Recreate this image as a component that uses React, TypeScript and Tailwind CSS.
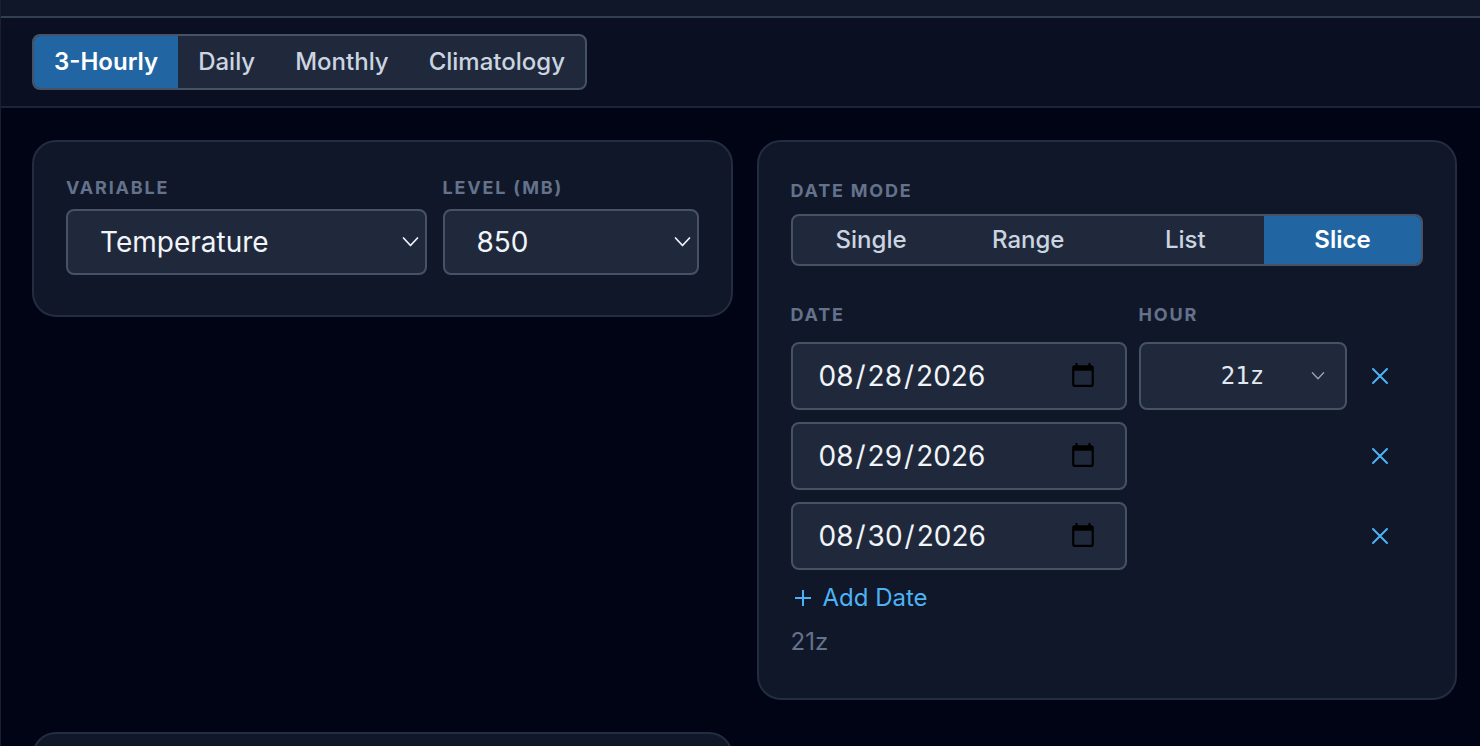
import { useState } from "react";

type SliceRow = { id: number; date: string };

const RESOLUTIONS = ["3-Hourly", "Daily", "Monthly", "Climatology"];
const DATE_MODES = ["Single", "Range", "List", "Slice"];
const VARIABLES = ["Temperature", "Humidity", "Geopotential Height"];
const LEVELS = ["1000", "850", "700", "500", "250"];
const HOURS = ["00z", "03z", "06z", "09z", "12z", "15z", "18z", "21z"];

const cardClass = "rounded-3xl border-2 border-[#232d40] bg-[#101729]";
const labelClass = "block text-lg font-bold uppercase tracking-widest text-[#64728b]";
const fieldClass = "w-full rounded-lg border-2 border-[#465366] bg-[#20293b]";
const dateFieldClass =
  "[&::-webkit-datetime-edit-month-field]:px-[2px] [&::-webkit-datetime-edit-day-field]:px-[2px] [&::-webkit-datetime-edit-year-field]:px-[2px]";

function Chevron({ className }: { className: string }) {
  return (
    <svg viewBox="0 0 16 10" fill="none" stroke="currentColor" strokeWidth="1.7" strokeLinecap="round" strokeLinejoin="round" className={className} aria-hidden="true">
      <path d="M1 1l7 7.5L15 1" />
    </svg>
  );
}

type SelectFieldProps = {
  id: string;
  label: string;
  options: string[];
  value: string;
  onChange: (value: string) => void;
};

function SelectField({ id, label, options, value, onChange }: SelectFieldProps) {
  return (
    <div>
      <label htmlFor={id} className={`${labelClass} mb-2 leading-[27px]`}>{label}</label>
      <div className="relative">
        <select id={id} value={value} onChange={(event) => onChange(event.target.value)} className={`${fieldClass} h-[66px] appearance-none px-8 text-[28px] text-[#f1f5f9]`}>
          {options.map((option) => <option key={option}>{option}</option>)}
        </select>
        <Chevron className="pointer-events-none absolute right-2 top-7 h-[10px] w-[17px] text-[#f1f5f9]" />
      </div>
    </div>
  );
}

type SegmentsProps = {
  options: string[];
  value: string;
  onChange: (value: string) => void;
  groupClass: string;
  buttonClass: string;
};

function Segments({ options, value, onChange, groupClass, buttonClass }: SegmentsProps) {
  return (
    <div className={`overflow-hidden rounded-lg border-2 border-[#465366] bg-[#20293b] ${groupClass}`}>
      {options.map((option) => (
        <button
          key={option}
          type="button"
          aria-pressed={option === value}
          onClick={() => onChange(option)}
          className={`text-2xl ${buttonClass} ${option === value ? "bg-[#2166a3] font-semibold text-white" : "font-medium text-[#cbd5e1]"}`}
        >
          {option}
        </button>
      ))}
    </div>
  );
}

export default function App() {
  const [resolution, setResolution] = useState("3-Hourly");
  const [variable, setVariable] = useState("Temperature");
  const [level, setLevel] = useState("850");
  const [mode, setMode] = useState("Slice");
  const [hour, setHour] = useState("21z");
  const [rows, setRows] = useState<SliceRow[]>([
    { id: 1, date: "2026-08-28" },
    { id: 2, date: "2026-08-29" },
    { id: 3, date: "2026-08-30" },
  ]);

  function updateRow(id: number, date: string) {
    setRows(rows.map((row) => (row.id === id ? { ...row, date } : row)));
  }

  function removeRow(id: number) {
    setRows(rows.filter((row) => row.id !== id));
  }

  function addRow() {
    const last = rows[rows.length - 1];
    setRows([...rows, { id: (last?.id ?? 0) + 1, date: last?.date ?? "" }]);
  }

  return (
    <div className="h-screen overflow-hidden border-l border-[#1a2030] bg-[#010414] font-['Inter',sans-serif]">
      <header className="h-[18px] border-b-2 border-[#334053] bg-[#101729]" />
      <nav className="flex border-b-2 border-[#1c2536] bg-[#0a1021] py-4 pl-[31px] pr-[23px]">
        <Segments options={RESOLUTIONS} value={resolution} onChange={setResolution} groupClass="flex" buttonClass="h-[52px] px-5" />
      </nav>

      <main className="grid grid-cols-2 items-start gap-x-6 gap-y-8 py-8 pl-[31px] pr-[23px]">
        <section className={`${cardClass} grid grid-cols-[1fr_256px] gap-4 px-8 pb-10 pt-8`}>
          <SelectField id="variable" label="Variable" options={VARIABLES} value={variable} onChange={setVariable} />
          <SelectField id="level" label="Level (mb)" options={LEVELS} value={level} onChange={setLevel} />
        </section>

        <section className={`${cardClass} px-8 pb-10 pt-8`}>
          <h2 className={`${labelClass} mb-1.5 leading-[34px]`}>Date mode</h2>
          <Segments options={DATE_MODES} value={mode} onChange={setMode} groupClass="grid grid-cols-4" buttonClass="h-12" />

          <div className="mt-8 grid grid-cols-[336px_208px_1fr] items-center gap-3">
            <span className={`${labelClass} pt-0.5 leading-[30px]`}>Date</span>
            <label htmlFor="hour" className={`${labelClass} col-span-2 pt-0.5 leading-[30px]`}>Hour</label>
            {rows.map((row, index) => (
              <div key={row.id} className="contents">
                <input
                  type="date"
                  aria-label={`Date ${index + 1}`}
                  value={row.date}
                  onChange={(event) => updateRow(row.id, event.target.value)}
                  className={`${fieldClass} ${dateFieldClass} h-[68px] pl-6 pr-[26px] text-[28px] text-[#f1f5f9]`}
                />
                {index === 0 ? (
                  <div className="relative">
                    <select id="hour" value={hour} onChange={(event) => setHour(event.target.value)} className={`${fieldClass} h-[68px] appearance-none text-center font-['DejaVu_Sans_Mono',monospace] text-2xl text-[#e2e8f0]`}>
                      {HOURS.map((option) => <option key={option}>{option}</option>)}
                    </select>
                    <Chevron className="pointer-events-none absolute right-[22px] top-[30px] h-2 w-[14px] text-[#94a3b8]" />
                  </div>
                ) : (
                  <span />
                )}
                <button type="button" aria-label={`Remove date ${index + 1}`} onClick={() => removeRow(row.id)} className="w-fit p-3 text-[#4db2f5]">
                  <svg viewBox="0 0 18 18" fill="none" stroke="currentColor" strokeWidth="2" strokeLinecap="round" className="size-[18px]" aria-hidden="true">
                    <path d="M2 2l14 14M16 2L2 16" />
                  </svg>
                </button>
              </div>
            ))}
          </div>

          <button type="button" onClick={addRow} className="mt-3 flex items-center gap-3 pl-1 text-2xl text-[#4db2f5]">
            <svg viewBox="0 0 16 16" fill="none" stroke="currentColor" strokeWidth="2" className="size-4" aria-hidden="true">
              <path d="M8 0v16M0 8h16" />
            </svg>
            Add Date
          </button>
          <p className="mt-3 text-2xl text-[#64728b]">{hour}</p>
        </section>

        <section className={`${cardClass} h-40`} />
      </main>
    </div>
  );
}
